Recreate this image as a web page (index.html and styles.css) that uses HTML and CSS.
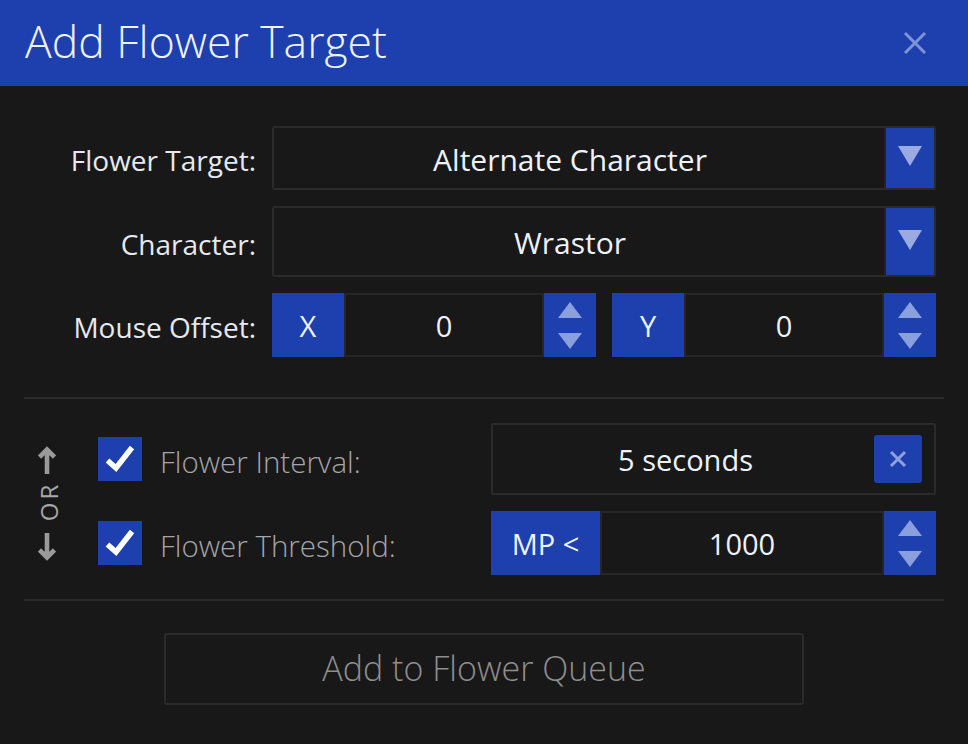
FILE: index.html
```html
<!DOCTYPE html>
<html>
<head>
<meta charset="utf-8">
<link rel="stylesheet" href="styles.css">
</head>
<body>
<div class="dialog">
  <header class="titlebar">
    <h1 class="title">Add Flower Target</h1>
    <span class="close" aria-label="Close">
      <svg width="24" height="24" viewBox="0 0 24 24"><path d="M2 2 L22 22 M22 2 L2 22" stroke="#7d93d6" stroke-width="3" fill="none"/></svg>
    </span>
  </header>

  <section class="target-grid">
    <div class="label">Flower Target:</div>
    <div class="select h64">
      <span class="select-value">Alternate Character</span>
      <span class="drop"><svg width="24" height="20" viewBox="0 0 24 20"><path d="M0 0 H24 L12 20 Z" fill="#9caae2"/></svg></span>
    </div>

    <div class="label">Character:</div>
    <div class="select h71">
      <span class="select-value">Wrastor</span>
      <span class="drop"><svg width="24" height="20" viewBox="0 0 24 20"><path d="M0 0 H24 L12 20 Z" fill="#9caae2"/></svg></span>
    </div>

    <div class="label">Mouse Offset:</div>
    <div class="offset-pair">
      <div class="numfield">
        <span class="tag axis">X</span>
        <span class="num">0</span>
        <span class="spin">
          <svg width="24" height="16" viewBox="0 0 24 16"><path d="M12 0 L24 16 H0 Z" fill="#8a9fdd"/></svg>
          <svg width="24" height="16" viewBox="0 0 24 16"><path d="M0 0 H24 L12 16 Z" fill="#8a9fdd"/></svg>
        </span>
      </div>
      <div class="numfield">
        <span class="tag axis">Y</span>
        <span class="num">0</span>
        <span class="spin">
          <svg width="24" height="16" viewBox="0 0 24 16"><path d="M12 0 L24 16 H0 Z" fill="#8a9fdd"/></svg>
          <svg width="24" height="16" viewBox="0 0 24 16"><path d="M0 0 H24 L12 16 Z" fill="#8a9fdd"/></svg>
        </span>
      </div>
    </div>
  </section>

  <div class="divider first"></div>

  <section class="conditions">
    <div class="or-col">
      <svg width="18" height="28" viewBox="0 0 18 28"><path d="M9 28 V4 M1.5 11 L9 3.5 L16.5 11" stroke="#9a9a9a" stroke-width="4.6" fill="none"/></svg>
      <div class="or"><span class="or-text">OR</span></div>
      <svg width="18" height="28" viewBox="0 0 18 28"><path d="M9 0 V24 M1.5 17 L9 24.5 L16.5 17" stroke="#9a9a9a" stroke-width="4.6" fill="none"/></svg>
    </div>
    <div class="cond-rows">
      <div class="cond-row">
        <span class="check"><svg width="44" height="44" viewBox="0 0 44 44"><path d="M9.5 23.5 L18 31 L34 10.5" stroke="#ffffff" stroke-width="5.5" fill="none"/></svg></span>
        <span class="cond-label">Flower Interval:</span>
        <div class="interval">
          <span class="interval-value">5 seconds</span>
          <span class="clear"><svg width="18" height="18" viewBox="0 0 18 18"><path d="M2 2 L16 16 M16 2 L2 16" stroke="#8ea0e0" stroke-width="3" fill="none"/></svg></span>
        </div>
      </div>
      <div class="cond-row">
        <span class="check"><svg width="44" height="44" viewBox="0 0 44 44"><path d="M9.5 23.5 L18 31 L34 10.5" stroke="#ffffff" stroke-width="5.5" fill="none"/></svg></span>
        <span class="cond-label">Flower Threshold:</span>
        <div class="numfield threshold">
          <span class="tag mp">MP &lt;</span>
          <span class="num">1000</span>
          <span class="spin">
            <svg width="24" height="16" viewBox="0 0 24 16"><path d="M12 0 L24 16 H0 Z" fill="#8a9fdd"/></svg>
            <svg width="24" height="16" viewBox="0 0 24 16"><path d="M0 0 H24 L12 16 Z" fill="#8a9fdd"/></svg>
          </span>
        </div>
      </div>
    </div>
  </section>

  <div class="divider second"></div>

  <footer class="actions">
    <button class="queue-btn">Add to Flower Queue</button>
  </footer>
</div>
</body>
</html>
```

FILE: styles.css
```css
* { box-sizing: border-box; }
html, body { margin: 0; padding: 0; background: #181818; }
body { font-family: "Open Sans", "Noto Sans", sans-serif; color: #eef2fb; }

.dialog { width: 968px; height: 744px; background: #181818; }

.titlebar {
  height: 86px;
  background: #1e40af;
  display: flex;
  align-items: center;
  justify-content: space-between;
  padding: 0 41px 0 25px;
}
.title {
  margin: 0;
  font-weight: 300;
  font-size: 44.5px;
  color: #eef2fb;
  line-height: 1;
  padding-bottom: 4px;
}
.close { display: flex; margin-top: -1px; }

.target-grid {
  display: grid;
  grid-template-columns: 256px 664px;
  column-gap: 16px;
  row-gap: 16px;
  padding-top: 40px;
  align-items: center;
}
.label {
  text-align: right;
  font-size: 28px;
  color: #e6e9f0;
  font-weight: 400;
  padding-top: 4px;
}

.select {
  display: flex;
  border: 2px solid #2a2a2a;
  border-radius: 3px;
}
.h64 { height: 64px; }
.h71 { height: 71px; }
.select-value {
  flex: 1;
  display: flex;
  align-items: center;
  justify-content: center;
  padding-right: 18px;
  font-size: 30px;
  padding-top: 2px;
}
.drop {
  width: 50px;
  background: #1e40af;
  border-left: 2px solid #222;
  display: flex;
  align-items: center;
  justify-content: center;
  padding-bottom: 4px;
}

.offset-pair {
  display: flex;
  gap: 16px;
  height: 64px;
}
.numfield {
  display: flex;
  height: 64px;
  flex: 1;
}
.tag {
  background: #1e40af;
  display: flex;
  align-items: center;
  justify-content: center;
  font-size: 29px;
  color: #eef2fb;
}
.axis { width: 72px; }
.num {
  flex: 1;
  border: 2px solid #262626;
  display: flex;
  align-items: center;
  justify-content: center;
  font-size: 29px;
}
.spin {
  width: 52px;
  background: #1e40af;
  display: flex;
  flex-direction: column;
  align-items: center;
  justify-content: center;
  gap: 15px;
}

.divider {
  height: 2px;
  background: #2a2a2a;
  margin: 0 24px;
}
.divider.first { margin-top: 40px; }

.conditions {
  display: flex;
  padding-top: 24px;
}
.or-col {
  width: 98px;
  display: flex;
  flex-direction: column;
  align-items: center;
  padding-top: 23px;
  padding-right: 4px;
}
.or {
  width: 18px;
  height: 36px;
  margin: 11px 0 12px 4px;
  display: flex;
  align-items: center;
  justify-content: center;
}
.or-text {
  transform: rotate(-90deg);
  font-size: 24px;
  line-height: 1;
  letter-spacing: 3px;
  padding-left: 3px;
  white-space: nowrap;
  color: #a8a8a8;
}
.cond-rows {
  display: flex;
  flex-direction: column;
  gap: 16px;
}
.cond-row {
  display: flex;
  align-items: center;
}
.check {
  width: 44px;
  height: 44px;
  background: #1e40af;
  display: flex;
}
.cond-label {
  width: 349px;
  padding-left: 18px;
  font-size: 29.5px;
  font-weight: 300;
  color: #a4a6ab;
  padding-top: 4px;
}
.interval {
  width: 445px;
  height: 72px;
  border: 2px solid #2a2a2a;
  border-radius: 2px;
  display: flex;
  align-items: center;
  padding-right: 12px;
}
.interval-value {
  flex: 1;
  text-align: center;
  font-size: 29px;
  padding-left: 4px;
}
.clear {
  width: 48px;
  height: 48px;
  background: #1e40af;
  border-radius: 3px;
  display: flex;
  align-items: center;
  justify-content: center;
}
.threshold { width: 445px; flex: none; }
.mp { width: 109px; }

.divider.second { margin-top: 24px; }

.actions {
  display: flex;
  justify-content: center;
  padding-top: 32px;
}
.queue-btn {
  width: 640px;
  height: 72px;
  background: transparent;
  border: 2px solid #2a2a2a;
  border-radius: 3px;
  font-family: "Open Sans", "Noto Sans", sans-serif;
  font-weight: 300;
  font-size: 34px;
  color: #8e8e8e;
  padding: 0 0 2px;
}
```
